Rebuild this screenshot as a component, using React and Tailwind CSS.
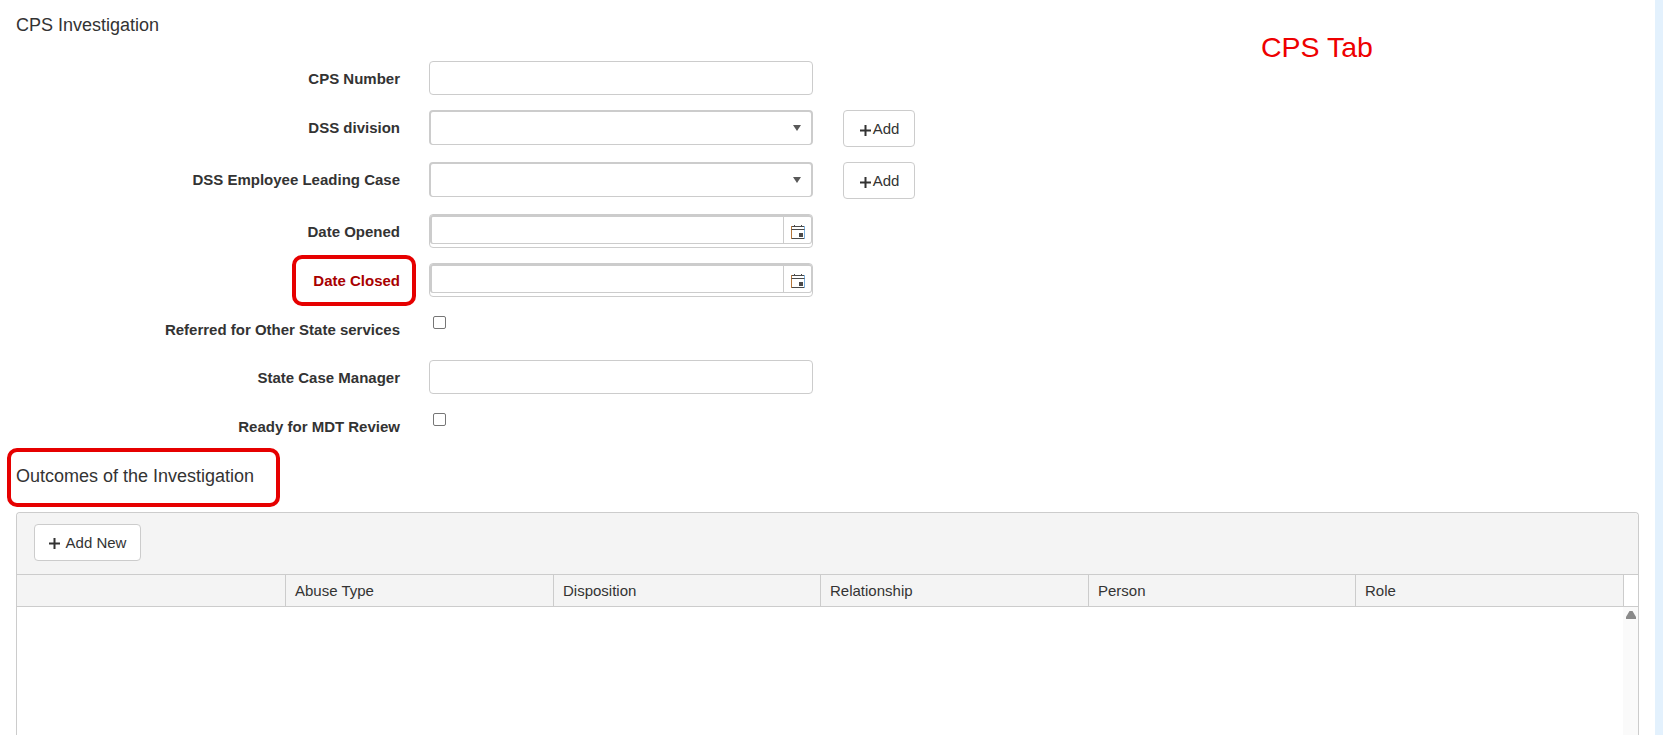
const labelBase = "w-[384px] shrink-0 text-right text-[15px] font-bold";

function Row({ label, red, children, mb = true, h }) {
  return (
    <div className={`flex ${mb ? "mb-[15px]" : ""} ${h || ""}`}>
      <label className={`${labelBase} leading-[20px] pt-[8px] ${red ? "text-[#a80000]" : "text-[#333333]"}`}>{label}</label>
      <div className="ml-[29px] flex">{children}</div>
    </div>
  );
}

function TextBox() {
  return <input className="block w-[384px] h-[34px] border border-[#cccccc] rounded-[4px] bg-white" />;
}

function SelectBox() {
  return (
    <div className="w-[384px] h-[35px] border border-[#cccccc] border-t-2 border-l-2 border-r-2 rounded-[4px] bg-white flex items-center justify-end pr-[10px]">
      <svg width="8" height="6" viewBox="0 0 8 6"><path d="M0 0h8L4 6z" fill="#595959" /></svg>
    </div>
  );
}

function AddButton() {
  return (
    <button className="ml-[30px] w-[72px] h-[37px] border border-[#cccccc] rounded-[4px] bg-white text-[15px] leading-[20px] text-[#333333] flex items-center justify-center gap-[2px] pt-[1px] pl-[1px]">
      <svg width="11" height="11" viewBox="0 0 11 11" className="mt-[3px]"><path d="M0 5.5h11M5.5 0v11" stroke="#333333" strokeWidth="2" /></svg>
      <span>Add</span>
    </button>
  );
}

function DateBox() {
  return (
    <div className="w-[384px] h-[34px] border border-[#cccccc] rounded-[4px] bg-white">
      <div className="h-[29px] border-t-2 border-l-2 border-r border-b border-[#cccccc] rounded-[3px] flex justify-end">
        <div className="w-[28px] border-l border-[#cccccc] flex items-center justify-center pt-[2px]">
          <svg width="14" height="15" viewBox="0 0 14 15" fill="none">
            <path d="M0.5 2.5h13v12h-13z" stroke="#4a4a4a" />
            <path d="M0.5 2v13" stroke="#b5763a" />
            <path d="M13.5 2v13" stroke="#7ab0e0" />
            <path d="M0.5 5.5h13" stroke="#4a4a4a" />
            <path d="M3.5 1v2M10.5 1v2" stroke="#4a4a4a" />
            <path d="M8 9h4v4H8z" fill="#4a4a4a" />
          </svg>
        </div>
      </div>
    </div>
  );
}

function Check() {
  return <input type="checkbox" className="appearance-none block w-[13px] h-[13px] mt-[4px] ml-[4px] border border-[#767676] rounded-[2px] bg-white" />;
}

const columns = [
  { name: "", w: "w-[269px]" },
  { name: "Abuse Type", w: "w-[268px]" },
  { name: "Disposition", w: "w-[267px]" },
  { name: "Relationship", w: "w-[268px]" },
  { name: "Person", w: "w-[267px]" },
  { name: "Role", w: "w-[268px]" },
];

export default function App() {
  return (
    <div className="relative flex h-[735px] overflow-hidden bg-white text-[#333333] font-['Liberation_Sans',Arial,sans-serif]">
      <main className="flex-1 min-w-0 pl-[16px] pr-[16px]">
        <h2 className="text-[18px] leading-[20px] font-normal mt-[15px] mb-[26px] text-[#333333]">CPS Investigation</h2>
        <div>
          <Row label="CPS Number"><TextBox /></Row>
          <Row label="DSS division" h="h-[37px]"><SelectBox /><AddButton /></Row>
          <Row label="DSS Employee Leading Case" h="h-[37px]"><SelectBox /><AddButton /></Row>
          <Row label="Date Opened"><DateBox /></Row>
          <Row label="Date Closed" red><DateBox /></Row>
          <Row label="Referred for Other State services" h="h-[33px]"><Check /></Row>
          <Row label="State Case Manager"><TextBox /></Row>
          <Row label="Ready for MDT Review" h="h-[33px]" mb={false}><Check /></Row>
        </div>
        <h2 className="text-[18px] leading-[20px] font-normal mt-[24px] mb-[26px] text-[#333333]">Outcomes of the Investigation</h2>
        <section className="h-[300px] border border-b-0 border-[#cccccc] rounded-t-[4px] bg-white">
          <div className="h-[62px] bg-[#f4f4f4] border-b border-[#cccccc] pl-[17px] pt-[11px] rounded-t-[4px]">
            <button className="w-[107px] h-[37px] border border-[#cccccc] rounded-[4px] bg-white text-[15px] leading-[20px] text-[#333333] flex items-center justify-center gap-[6px] pt-[1px]">
              <svg width="11" height="11" viewBox="0 0 11 11"><path d="M0 5.5h11M5.5 0v11" stroke="#333333" strokeWidth="2" /></svg>
              <span>Add New</span>
            </button>
          </div>
          <div className="flex h-[32px] border-b border-[#cccccc] bg-white">
            {columns.map((c, i) => (
              <div key={i} className={`${c.w} shrink-0 bg-[#f4f4f4] border-r border-[#cccccc] pl-[9px] text-[15px] leading-[31px] text-[#333333]`}>{c.name}</div>
            ))}
          </div>
          <div className="flex justify-end h-[200px]">
            <div className="w-[15px] bg-[#fafafa] pt-[4px] flex justify-center">
              <svg width="10" height="8" viewBox="0 0 10 8"><path d="M3.5 0h3L10 6v2H0V6z" fill="#8a8a8a" /></svg>
            </div>
          </div>
        </section>
      </main>
      <aside className="w-[8px] shrink-0 bg-[#e3f1fd]" />
      <div className="absolute left-[1261px] top-[31px] text-[28.5px] leading-[32px] text-[#ee0000]">CPS Tab</div>
      <div className="absolute left-[292px] top-[255px] w-[124px] h-[51px] border-[4px] border-[#e60000] rounded-[10px]" />
      <div className="absolute left-[7px] top-[448px] w-[273px] h-[59px] border-[4px] border-[#e60000] rounded-[10px]" />
    </div>
  );
}
